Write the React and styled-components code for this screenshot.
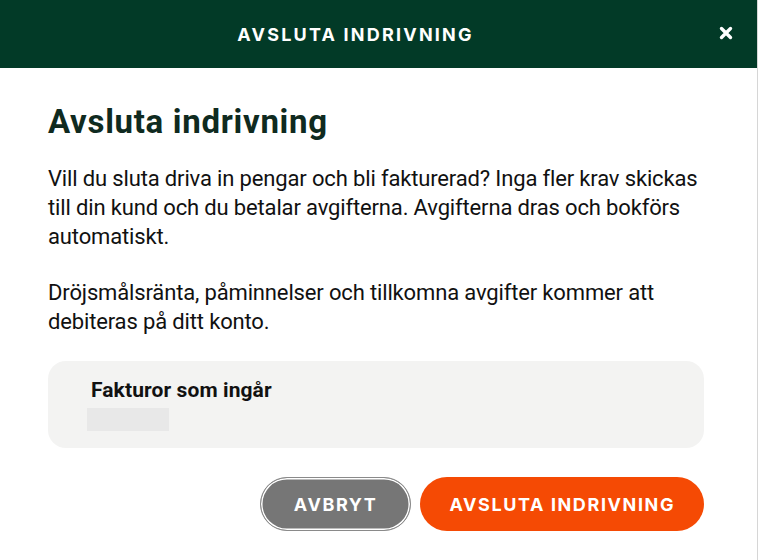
import styled, { createGlobalStyle } from "styled-components";

const GlobalStyle = createGlobalStyle`
  html, body {
    margin: 0;
    padding: 0;
    background: #fff;
  }
  * {
    box-sizing: border-box;
  }
`;

const Modal = styled.div`
  width: 758px;
  height: 560px;
  background: #fff;
  border-right: 1px solid #d6d6d6;
  display: flex;
  flex-direction: column;
`;

const Header = styled.header`
  height: 68px;
  background: #023a27;
  display: flex;
  align-items: center;
  justify-content: center;
  position: relative;
  padding-right: 46px;
`;

const HeaderTitle = styled.h2`
  margin: 0;
  color: #fff;
  font-family: "Inter", "Liberation Sans", sans-serif;
  font-weight: 700;
  font-size: 18px;
  letter-spacing: 2.2px;
`;

const CloseButton = styled.button`
  position: absolute;
  right: 24px;
  top: 26px;
  width: 14px;
  height: 14px;
  padding: 0;
  border: none;
  background: none;
  cursor: pointer;
  display: flex;
`;

const Body = styled.div`
  padding: 34px 53px 0 48px;
  display: flex;
  flex-direction: column;
`;

const Title = styled.h1`
  margin: 0 0 22px;
  color: #0f2a20;
  font-family: "Roboto", "Liberation Sans", sans-serif;
  font-weight: 700;
  font-size: 33px;
  line-height: 40px;
  letter-spacing: 0.7px;
`;

const Text = styled.p`
  margin: 0 0 ${(p) => (p.$last ? "25px" : "27px")};
  color: #111;
  font-family: "Roboto", "Liberation Sans", sans-serif;
  font-size: 22px;
  line-height: 29px;
  letter-spacing: -0.15px;
`;

const InvoiceBox = styled.section`
  background: #f3f3f2;
  border-radius: 18px;
  padding: 17px 44px 17px 39px;
  display: flex;
  flex-direction: column;
`;

const BoxTitle = styled.h3`
  margin: 0 0 6px 4px;
  color: #111;
  font-family: "Roboto", "Liberation Sans", sans-serif;
  font-weight: 700;
  font-size: 21px;
  line-height: 24px;
  letter-spacing: 0.1px;
`;

const Placeholder = styled.div`
  width: 82px;
  height: 23px;
  background: #e8e8e8;
`;

const Actions = styled.div`
  display: flex;
  justify-content: flex-end;
  gap: 9px;
  margin-top: 29px;
`;

const Button = styled.button`
  height: 54px;
  border-radius: 27px;
  padding: 0 ${(p) => p.$pad}px;
  background: ${(p) => p.$bg};
  color: #fff;
  border: ${(p) => (p.$ring ? "1px solid #8a8a8a" : "none")};
  box-shadow: ${(p) => (p.$ring ? "inset 0 0 0 1.5px #fff" : "none")};
  font-family: "Inter", "Liberation Sans", sans-serif;
  font-weight: 700;
  font-size: 18px;
  letter-spacing: 1.6px;
  cursor: pointer;
`;

export default function App() {
  return (
    <>
      <GlobalStyle />
      <Modal>
        <Header>
          <HeaderTitle>AVSLUTA INDRIVNING</HeaderTitle>
          <CloseButton aria-label="Stäng">
            <svg width="14" height="14" viewBox="0 0 14 14">
              <path
                d="M2.5 2.5 L11.5 11.5 M11.5 2.5 L2.5 11.5"
                stroke="#fff"
                strokeWidth="3.4"
                strokeLinecap="round"
              />
            </svg>
          </CloseButton>
        </Header>
        <Body>
          <Title>Avsluta indrivning</Title>
          <Text>
            Vill du sluta driva in pengar och bli fakturerad? Inga fler krav
            skickas till din kund och du betalar avgifterna. Avgifterna dras och
            bokförs automatiskt.
          </Text>
          <Text $last>
            Dröjsmålsränta, påminnelser och tillkomna avgifter kommer att
            debiteras på ditt konto.
          </Text>
          <InvoiceBox>
            <BoxTitle>Fakturor som ingår</BoxTitle>
            <Placeholder />
          </InvoiceBox>
          <Actions>
            <Button $bg="#767676" $pad={33} $ring>
              AVBRYT
            </Button>
            <Button $bg="#f54a04" $pad={29}>
              AVSLUTA INDRIVNING
            </Button>
          </Actions>
        </Body>
      </Modal>
    </>
  );
}
